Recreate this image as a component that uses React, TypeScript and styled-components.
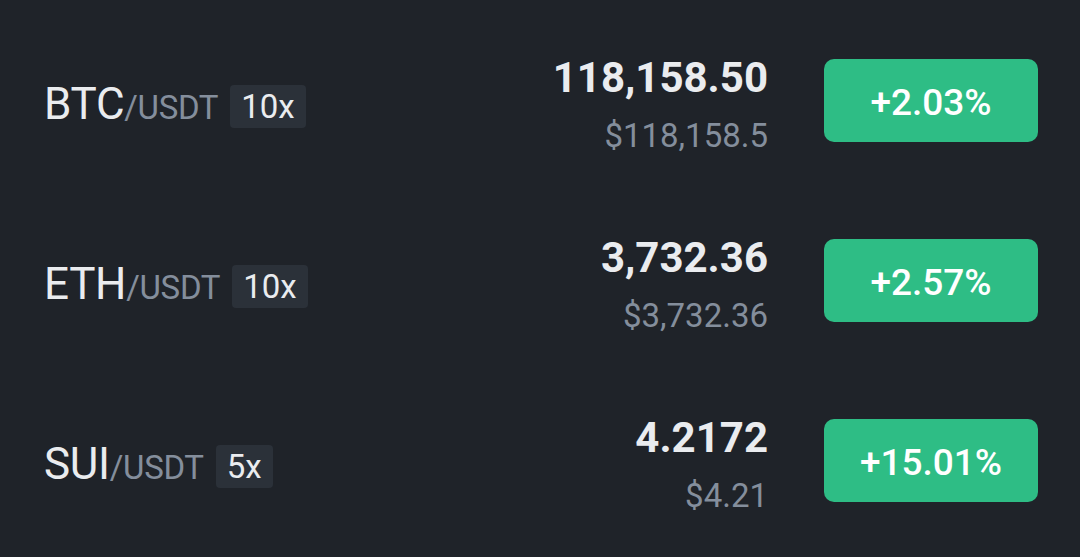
import * as React from 'react';
import styled, { createGlobalStyle } from 'styled-components';

const GlobalStyle = createGlobalStyle`
  html, body {
    margin: 0;
    padding: 0;
    background: #1f2329;
  }
  body {
    font-family: Roboto, 'Liberation Sans', sans-serif;
    -webkit-font-smoothing: antialiased;
  }
`;

type Ticker = {
  base: string;
  leverage: string;
  price: string;
  fiat: string;
  change: string;
};

const tickers: Ticker[] = [
  { base: 'BTC', leverage: '10x', price: '118,158.50', fiat: '$118,158.5', change: '+2.03%' },
  { base: 'ETH', leverage: '10x', price: '3,732.36', fiat: '$3,732.36', change: '+2.57%' },
  { base: 'SUI', leverage: '5x', price: '4.2172', fiat: '$4.21', change: '+15.01%' },
];

export default function App() {
  return (
    <>
      <GlobalStyle />
      <List>
        {tickers.map((t) => (
          <Row key={t.base}>
            <Pair>
              <Base>{t.base}</Base>
              <Quote>/USDT</Quote>
              <Leverage>{t.leverage}</Leverage>
            </Pair>
            <Prices>
              <Price>{t.price}</Price>
              <Fiat>{t.fiat}</Fiat>
            </Prices>
            <Change>{t.change}</Change>
          </Row>
        ))}
      </List>
    </>
  );
}

const List = styled.div`
  width: 1080px;
  height: 557px;
  box-sizing: border-box;
  padding: 10px 42px 0 44px;
  display: flex;
  flex-direction: column;
  background: #1f2329;
`;

const Row = styled.div`
  height: 180px;
  display: flex;
  align-items: center;
`;

const Pair = styled.div`
  flex: 1;
  display: flex;
  align-items: center;
  padding-top: 8px;
`;

const Base = styled.span`
  font-size: 44px;
  font-weight: 400;
  color: #eaecef;
  letter-spacing: -0.3px;
`;

const Quote = styled.span`
  font-size: 33px;
  color: #848e9c;
  margin-top: 6px;
  letter-spacing: -0.3px;
`;

const Leverage = styled.span`
  margin-left: 12px;
  margin-top: 4px;
  height: 43px;
  padding: 0 11px;
  display: flex;
  align-items: center;
  border-radius: 4px;
  background: #2b3139;
  color: #eaecef;
  font-size: 33px;
`;

const Prices = styled.div`
  display: flex;
  flex-direction: column;
  align-items: flex-end;
  padding-top: 8px;
`;

const Price = styled.span`
  font-size: 42px;
  font-weight: 700;
  color: #eaecef;
  line-height: 48px;
`;

const Fiat = styled.span`
  margin-top: 15px;
  font-size: 33px;
  color: #848e9c;
  line-height: 38px;
`;

const Change = styled.div`
  margin-left: 56px;
  width: 214px;
  height: 83px;
  border-radius: 10px;
  background: #2ebd85;
  color: #ffffff;
  font-size: 37px;
  font-weight: 500;
  display: flex;
  align-items: center;
  justify-content: center;
  padding-top: 4px;
  box-sizing: border-box;
`;
